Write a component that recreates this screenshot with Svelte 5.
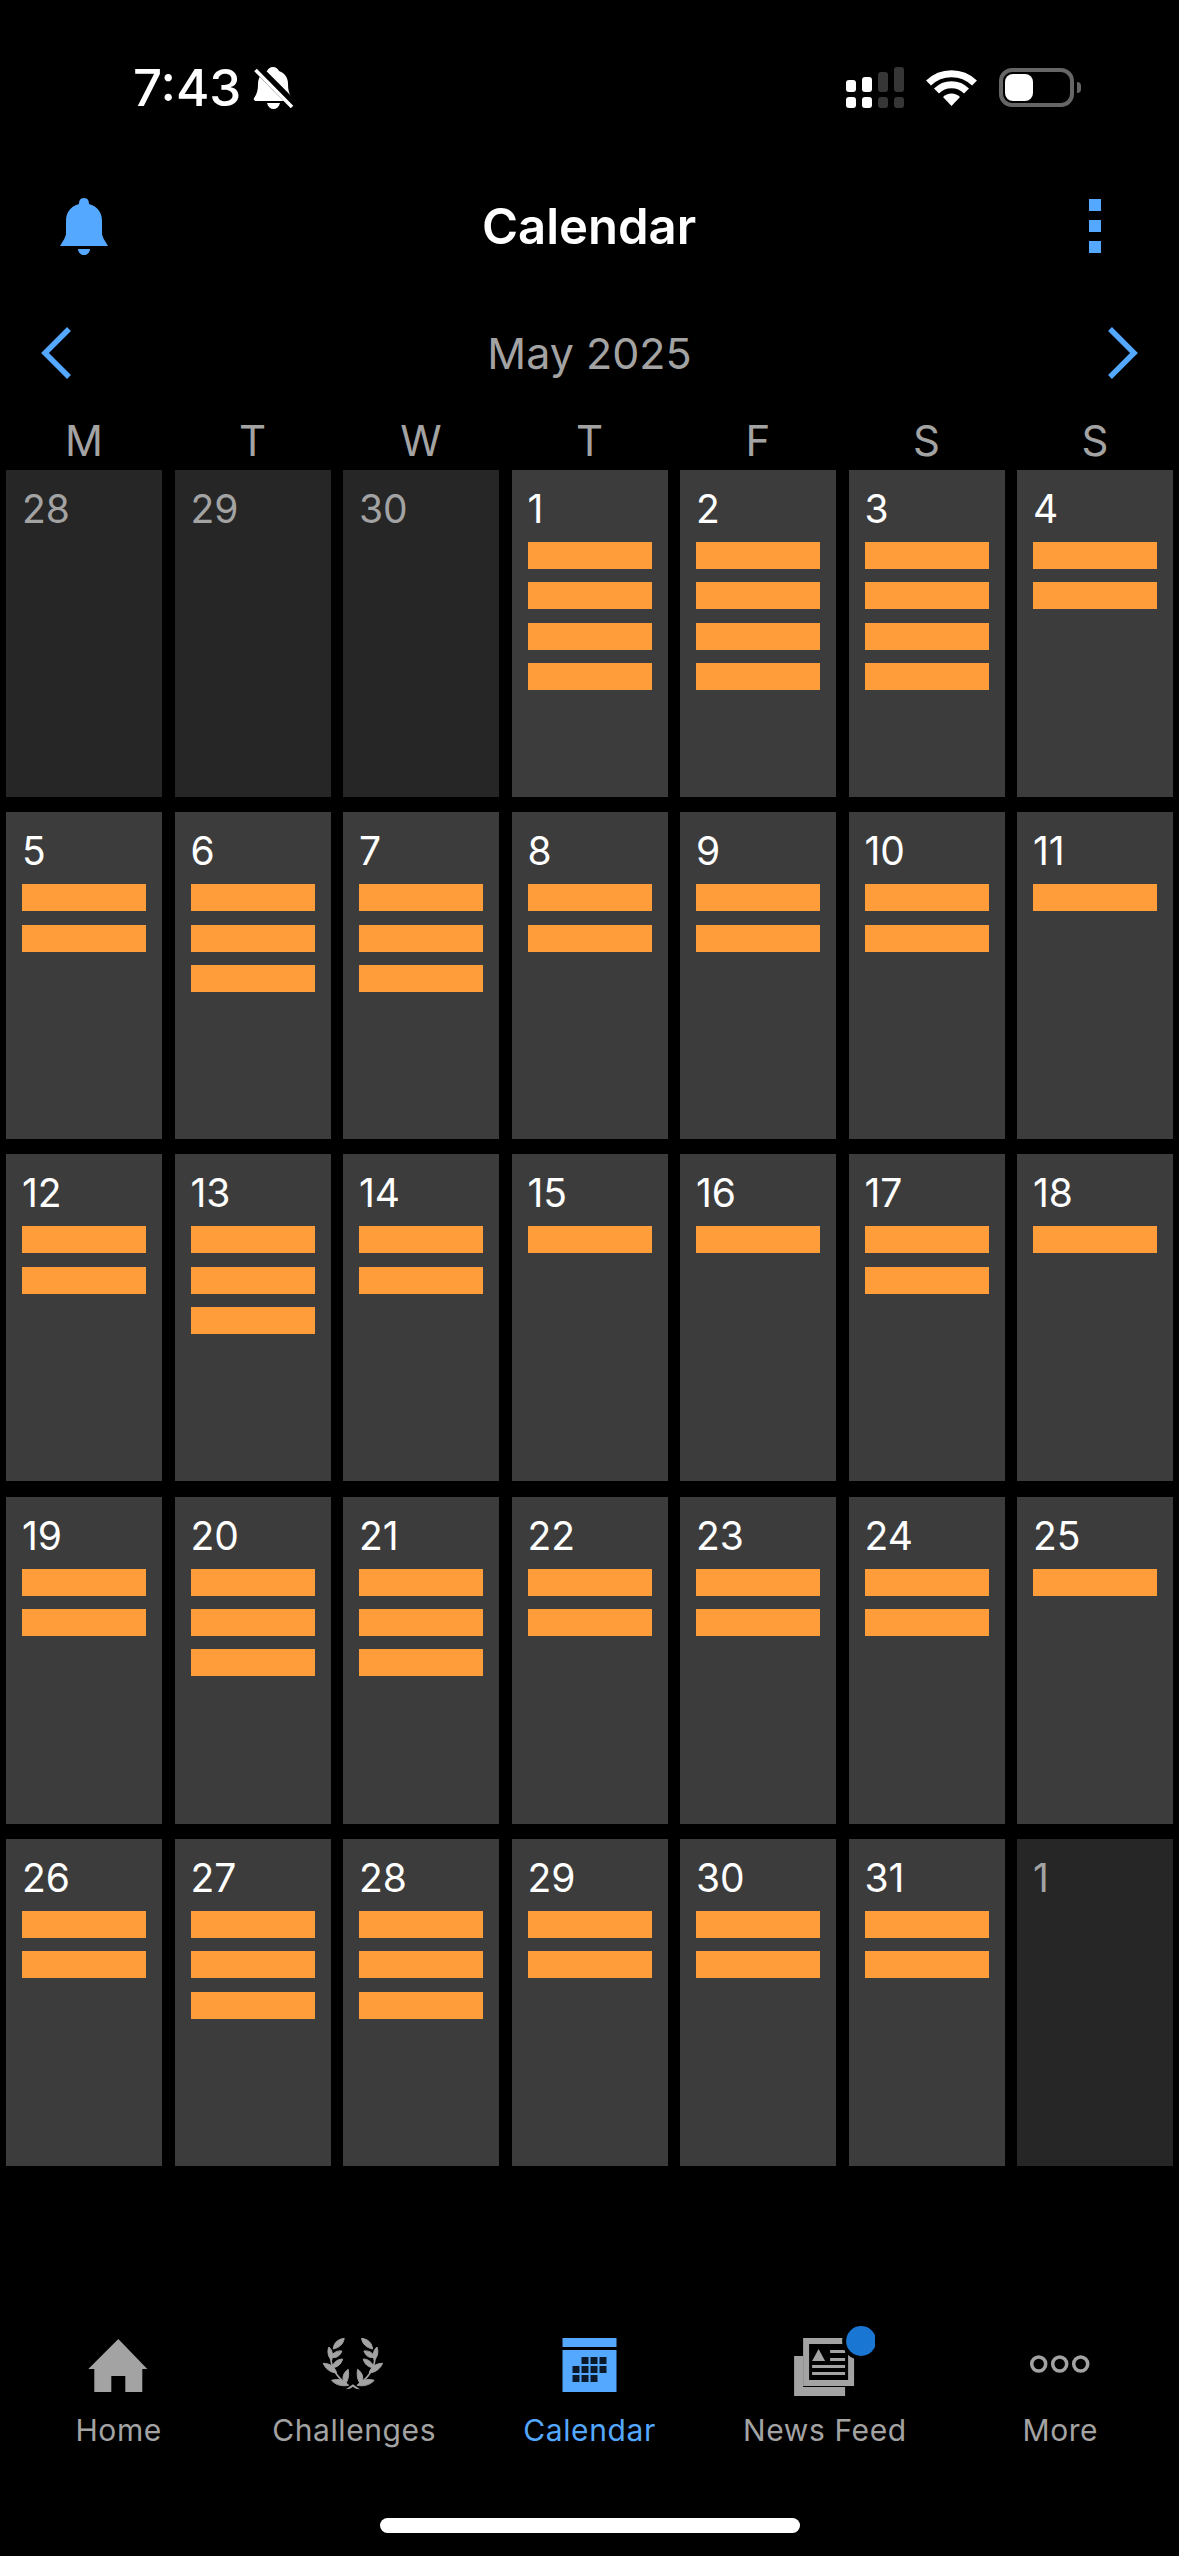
<script>
  const weekdays = ['M', 'T', 'W', 'T', 'F', 'S', 'S'];
  const days = [
    [28, 0, true], [29, 0, true], [30, 0, true], [1, 4], [2, 4], [3, 4], [4, 2],
    [5, 2], [6, 3], [7, 3], [8, 2], [9, 2], [10, 2], [11, 1],
    [12, 2], [13, 3], [14, 2], [15, 1], [16, 1], [17, 2], [18, 1],
    [19, 2], [20, 3], [21, 3], [22, 2], [23, 2], [24, 2], [25, 1],
    [26, 2], [27, 3], [28, 3], [29, 2], [30, 2], [31, 2], [1, 0, true]
  ];
  const calDots = [
    [581, 2356], [590, 2356], [599, 2356],
    [572, 2365], [581, 2365], [590, 2365], [599, 2365],
    [572, 2374], [581, 2374], [590, 2374]
  ];
  const leaves = `M193 52C172 55 162 66 160 84C178 80 190 70 193 52Z
    M147 78C141 92 145 108 155 118C161 104 158 88 147 78Z
    M186 90C172 88 160 94 153 108C168 113 180 106 186 90Z
    M130 127C137 143 150 154 170 156C166 138 150 127 130 127Z
    M188 114C172 115 160 124 157 140C173 139 184 130 188 114Z
    M205 145C190 155 184 172 195 190C205 180 208 162 205 145Z
    M155 178C168 192 186 197 206 193C196 178 176 172 155 178Z`;
</script>

<div class="page">
  <div class="status">
    <div class="time-group">
      <span class="time">7:43</span>
      <svg class="mute" viewBox="252 65 44 46" width="44" height="46">
        <path fill="#fff" d="M273 67c-3 0-5 2-6 4-6 2-9 7-9 13 0 6-1 10-4 14-.6 1.500 0 3 2 3h34c2 0 2.600-1.500 2-3-3-4-4-8-4-14 0-6-3-11-9-13-1-2-3-4-6-4Z"/>
        <path fill="#fff" d="M267 103h13c-1 4-3.500 6-6.500 6s-5.500-2-6.500-6Z"/>
        <path stroke="#000" stroke-width="9" d="M257 68 294 105"/>
        <path stroke="#fff" stroke-width="3.500" d="M255.500 70 292 107"/>
      </svg>
    </div>
    <div class="status-right">
      <svg viewBox="846 67 58 41" width="58" height="41">
        <g fill="#fff">
          <rect x="846" y="80" width="10" height="12" rx="3"/>
          <rect x="862" y="77" width="10" height="15" rx="3"/>
          <rect x="846" y="97" width="10" height="11" rx="3"/>
          <rect x="862" y="97" width="10" height="11" rx="3"/>
        </g>
        <g fill="#363636">
          <rect x="878" y="72" width="10" height="20" rx="3"/>
          <rect x="894" y="67" width="10" height="25" rx="3"/>
          <rect x="878" y="97" width="10" height="11" rx="3"/>
          <rect x="894" y="97" width="10" height="11" rx="3"/>
        </g>
      </svg>
      <svg viewBox="926 69 51 38" width="51" height="38">
        <g fill="none" stroke="#fff" stroke-width="7">
          <path d="M928.500 83A33 33 0 0 1 974.500 83"/>
          <path d="M936.500 91A21 21 0 0 1 966.500 91"/>
        </g>
        <path fill="#fff" d="M951.500 106L943 97A12 12 0 0 1 960 97Z"/>
      </svg>
      <div class="battery"><div class="battery-fill"></div></div>
      <div class="battery-nub"></div>
    </div>
  </div>

  <header class="nav">
    <svg viewBox="60 198 48 60" width="48" height="60">
      <path fill="#54a8ff" d="M84 200c-4 0-5 3-5 6-8 2-13 8-13 17v13c0 1-1 3-1.500 4.500L60 248h48l-4.500-7.500c-.5-1.500-1.500-3.500-1.500-4.500v-13c0-9-5-15-13-17 0-3-1-6-5-6Z"/>
      <path fill="#54a8ff" d="M78 251h12c-.5 4-3 6-6 6s-5.500-2-6-6Z"/>
    </svg>
    <h1>Calendar</h1>
    <div class="kebab"><i></i><i></i><i></i></div>
  </header>

  <div class="month">
    <svg viewBox="0 0 30 52" width="30" height="52">
      <path fill="none" stroke="#54a8ff" stroke-width="5.500" d="M28 2 4 26l24 24"/>
    </svg>
    <span>May 2025</span>
    <svg viewBox="0 0 30 52" width="30" height="52">
      <path fill="none" stroke="#54a8ff" stroke-width="5.500" d="M2 2 26 26 2 50"/>
    </svg>
  </div>

  <div class="weekdays">
    {#each weekdays as d}<div>{d}</div>{/each}
  </div>

  <div class="grid">
    {#each days as [n, count, dim]}
      <div class="cell" class:dim>
        <div class="date">{n}</div>
        <div class="bars">
          {#each Array(count) as _}<div class="bar"></div>{/each}
        </div>
      </div>
    {/each}
  </div>

  <nav class="tabs">
    <div class="tab">
      <svg viewBox="68.700 2330 100 70" width="100" height="70">
        <path fill="#a3a3a3" fill-rule="evenodd" d="M118 2338 147 2368H142V2391H125V2375H111V2391H94V2368H88Z"/>
      </svg>
      <span>Home</span>
    </div>
    <div class="tab">
      <svg viewBox="72.300 30 300 210" width="100" height="70">
        <g fill="#a3a3a3" stroke="#a3a3a3" stroke-width="3" stroke-linejoin="round">
          <path d={leaves}/>
          <path d={leaves} transform="matrix(-1 0 0 1 438 0)"/>
        </g>
        <path fill="#a3a3a3" d="M198 205L219 190L240 205L228 203L219 197L210 203Z"/>
        <g fill="none" stroke="#a3a3a3" stroke-width="5">
          <path d="M153 105C152 135 168 165 198 188"/>
          <path d="M285 105C286 135 270 165 240 188"/>
        </g>
      </svg>
      <span>Challenges</span>
    </div>
    <div class="tab active">
      <svg viewBox="539.500 2330 100 70" width="100" height="70">
        <rect x="562" y="2337" width="54" height="9" fill="#54a8ff"/>
        <rect x="562" y="2349" width="54" height="42" fill="#54a8ff"/>
        {#each calDots as [x, y]}<rect {x} {y} width="7" height="7" fill="#0b1a2b"/>{/each}
      </svg>
      <span>Calendar</span>
    </div>
    <div class="tab">
      <svg viewBox="774.900 2325 100 75" width="100" height="75" class="news">
        <g fill="#a3a3a3">
          <path fill-rule="evenodd" d="M794 2355h9v31h42v9h-51Z"/>
          <path fill-rule="evenodd" d="M803 2337h51v48h-51ZM809 2343v36h39v-36Z"/>
          <path d="M812 2360 818.500 2348 825 2360Z"/>
          <rect x="830" y="2349" width="15" height="3"/>
          <rect x="830" y="2357" width="15" height="3"/>
          <rect x="812" y="2364" width="33" height="3"/>
          <rect x="812" y="2371" width="33" height="3"/>
        </g>
        <circle cx="861" cy="2340" r="19" fill="#000"/>
        <circle cx="861" cy="2340" r="15" fill="#1976d2"/>
      </svg>
      <span>News Feed</span>
    </div>
    <div class="tab">
      <svg viewBox="1010.300 2330 100 70" width="100" height="70">
        <g fill="none" stroke="#a3a3a3" stroke-width="3.500">
          <circle cx="1039" cy="2363" r="7"/>
          <circle cx="1060" cy="2363" r="7"/>
          <circle cx="1081" cy="2363" r="7"/>
        </g>
      </svg>
      <span>More</span>
    </div>
  </nav>

  <div class="home-bar"><div></div></div>
</div>

<style>
  :global(body) {
    margin: 0;
    background: #000;
  }
  .page {
    width: 1179px;
    height: 2556px;
    background: #000;
    color: #a3a3a3;
    font-family: Inter, "Liberation Sans", sans-serif;
    display: flex;
    flex-direction: column;
    overflow: hidden;
  }
  svg {
    display: block;
  }
  .status {
    height: 190px;
    box-sizing: border-box;
    padding: 67px 98px 0 133px;
    display: flex;
    justify-content: space-between;
    align-items: flex-start;
  }
  .time-group {
    display: flex;
    align-items: center;
    gap: 11px;
    height: 42px;
  }
  .time {
    font-size: 51px;
    font-weight: 500;
    line-height: 42px;
    color: #fff;
  }
  .status-right {
    display: flex;
    align-items: center;
    height: 41px;
  }
  .status-right > svg:nth-child(2) {
    margin-left: 22px;
  }
  .battery {
    margin-left: 22px;
    width: 75px;
    height: 39px;
    box-sizing: border-box;
    border: 4px solid #666;
    border-radius: 13px;
    padding: 2px;
  }
  .battery-fill {
    width: 28px;
    height: 27px;
    background: #fff;
    border-radius: 8px;
  }
  .battery-nub {
    width: 4px;
    height: 11px;
    margin-left: 3px;
    background: #666;
    border-radius: 0 6px 6px 0;
  }
  .nav {
    height: 72px;
    padding: 0 78px 0 60px;
    display: flex;
    align-items: center;
    justify-content: space-between;
    position: relative;
  }
  h1 {
    margin: 0;
    font-size: 49px;
    font-weight: 600;
    color: #fff;
    flex: 1;
    text-align: center;
    padding-right: 19px;
  }
  .kebab {
    width: 12px;
    display: flex;
    flex-direction: column;
    gap: 9px;
  }
  .kebab i {
    display: block;
    height: 12px;
    background: #54a8ff;
  }
  .month {
    margin-top: 65px;
    height: 52px;
    padding: 0 41px;
    display: flex;
    justify-content: space-between;
    align-items: center;
    font-size: 43px;
    color: #a3a3a3;
  }
  .weekdays {
    margin-top: 33px;
    height: 58px;
    padding: 0 6px;
    display: grid;
    grid-template-columns: repeat(7, 156px);
    column-gap: 12.5px;
    font-size: 42px;
    line-height: 58px;
    text-align: center;
  }
  .grid {
    padding: 0 6px;
    display: grid;
    grid-template-columns: repeat(7, 156px);
    grid-auto-rows: 327px;
    column-gap: 12.5px;
    row-gap: 15.2px;
  }
  .cell {
    background: #3c3c3c;
    padding: 0 16px;
    color: #fff;
  }
  .cell.dim {
    background: #262626;
    color: #a3a3a3;
  }
  .date {
    height: 72px;
    line-height: 78px;
    font-size: 39px;
  }
  .bars {
    display: flex;
    flex-direction: column;
    gap: 13.4px;
  }
  .bar {
    height: 27px;
    background: #ff9d3b;
  }
  .tabs {
    margin-top: 165px;
    padding: 0 1px;
    display: flex;
  }
  .tab {
    flex: 1;
    height: 125px;
    display: flex;
    flex-direction: column;
    align-items: center;
    font-size: 30px;
    letter-spacing: 0.6px;
    color: #a3a3a3;
  }
  .tab svg {
    height: 70px;
    flex: none;
  }
  .tab .news {
    height: 75px;
    margin-top: -5px;
  }
  .tab span {
    line-height: 36px;
    margin-top: 11px;
  }
  .tab.active {
    color: #54a8ff;
  }
  .home-bar {
    margin-top: 62px;
    display: flex;
    justify-content: center;
  }
  .home-bar div {
    width: 420px;
    height: 15px;
    border-radius: 8px;
    background: #fff;
  }
</style>
